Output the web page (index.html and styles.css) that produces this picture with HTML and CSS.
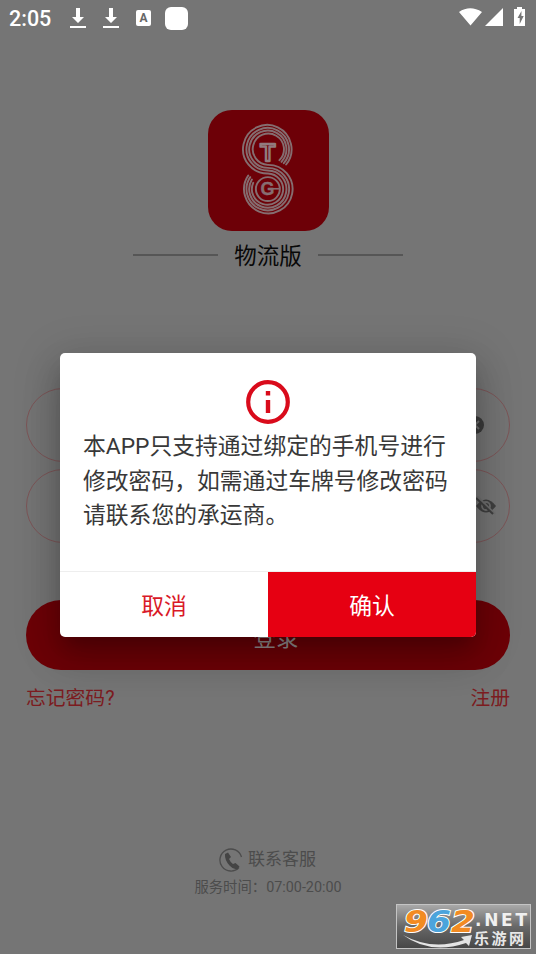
FILE: index.html
```html
<!DOCTYPE html>
<html lang="zh-CN">
<head>
<meta charset="utf-8">
<title>物流版</title>
<link rel="stylesheet" href="styles.css">
</head>
<body>
<div class="screen">
  <header class="status">
    <span class="clock">2:05</span>
    <svg class="dl" viewBox="0 0 16 22"><path d="M6 1h4v9h4l-6 6-6-6h4zM0 19h16v2H0z"/></svg>
    <svg class="dl" viewBox="0 0 16 22"><path d="M6 1h4v9h4l-6 6-6-6h4zM0 19h16v2H0z"/></svg>
    <span class="lang">A</span>
    <span class="app"></span>
    <svg class="signals" viewBox="0 0 70 22"><path d="M0 5Q11-2.500 23 5L11.500 18.500zM44 1v18H26zM55 2h3V0h5v2h3v17H55z"/><path class="bolt" d="M62.500 4l-4 7h2.200v6l4-8h-2.300z"/></svg>
  </header>
  <main class="login">
    <svg class="logo" viewBox="22 30 364 364">
      <rect class="logo-bg" x="22" y="30" width="364" height="364" rx="72"/>
      <g class="strands">
        <path d="M257 194A73 73 0 1 0 202 221A47 47 0 1 1 158 249"/>
        <path d="M250 190A64 64 0 1 0 202 212A56 56 0 1 1 154 239"/>
        <path d="M243 186A56 56 0 1 0 202 204A64 64 0 1 1 149 232"/>
        <path d="M237 181A47 47 0 1 0 202 195A73 73 0 1 1 143 227"/>
        <circle cx="202" cy="268" r="36"/>
      </g>
      <text class="letter-t" x="202" y="182" text-anchor="middle">T</text>
      <text class="letter-g" x="201" y="287" text-anchor="middle">G</text>
      <path class="g-bar" d="M208 267h30"/>
    </svg>
    <div class="edition"><i></i><span>物流版</span><i></i></div>
    <div class="field"><svg class="clear" viewBox="0 0 18 18"><circle cx="9" cy="9" r="9"/><path d="M5 5l8 8M13 5l-8 8"/></svg></div>
    <div class="field second"><svg class="eye" viewBox="0 0 22 20"><path d="M1 10Q11-3 21 10Q11 23 1 10z"/><circle cx="11" cy="10" r="4"/><path class="cut" d="M2 0l18 18"/><path class="slash" d="M1 2l17 16"/></svg></div>
    <div class="submit">登录</div>
    <div class="links"><span>忘记密码?</span><span>注册</span></div>
    <footer>
      <div class="service"><svg viewBox="0 0 24 24"><path class="ring" d="M22.500 9A11 11 0 1 0 20 19.500"/><path class="phone" d="M6 6l3-1.500 3 4.500-2 2q1.500 3.500 4 5l2.500-1 4 3.500-2 2.500q-4 1-8-3.500Q5.500 12 6 6z"/></svg><span>联系客服</span></div>
      <div class="hours">服务时间：07:00-20:00</div>
    </footer>
  </main>
  <section class="dialog">
    <svg class="info" viewBox="0 0 44 44"><circle cx="22" cy="22" r="19.800"/><path d="M19.800 11h4.400v4.400h-4.400zM19.800 20h4.400v13h-4.400z"/></svg>
    <p>本APP只支持通过绑定的手机号进行<br>修改密码，如需通过车牌号修改密码<br>请联系您的承运商。</p>
    <div class="actions"><span>取消</span><span class="confirm">确认</span></div>
  </section>
  <svg class="watermark" viewBox="0 0 135 45">
    <defs><linearGradient id="shade" x2="0" y2="1"><stop stop-color="#aaa"/><stop offset=".5" stop-color="#686868"/><stop offset="1" stop-color="#464646"/></linearGradient></defs>
    <rect x=".5" y=".5" width="134" height="44" fill="url(#shade)" stroke="#c4c4c4"/>
    <path class="swoosh" d="M7 31Q36 47 68 36L65 33L76 31L73 42L70 39Q34 51 7 31z"/>
    <g class="digits"><text class="orange" x="8" y="27.500" textLength="24" lengthAdjust="spacingAndGlyphs">9</text><text class="blue" x="31" y="27.500" textLength="24" lengthAdjust="spacingAndGlyphs">6</text><text class="orange" x="55" y="27.500" textLength="24" lengthAdjust="spacingAndGlyphs">2</text></g>
    <text class="net" x="79" y="21.500" textLength="52" lengthAdjust="spacing">.NET</text>
    <text class="site" x="78" y="39.500" textLength="50">乐游网</text>
  </svg>
</div>
</body>
</html>
```
FILE: styles.css
```css
* { box-sizing: border-box; }
body { margin: 0; font-family: Roboto, "Noto Sans CJK SC", sans-serif; }
.screen { position: relative; width: 536px; height: 954px; overflow: hidden; background: #757575; }
.status { display: flex; align-items: center; height: 36px; padding: 0 9px; color: #fff; }
.clock { width: 61px; padding-top: 2px; font-size: 21.5px; font-weight: 500; line-height: 36px; }
.dl { width: 16px; height: 22px; margin-right: 17px; fill: #fff; }
.lang { width: 15px; height: 16px; border-radius: 2px; background: #fff; color: #666; font-size: 12px; font-weight: 700; line-height: 16px; text-align: center; }
.app { width: 23px; height: 23px; margin-left: 14px; border-radius: 6px; background: #fff; }
.signals { width: 70px; height: 22px; margin-left: auto; margin-right: -2px; fill: #fff; }
.signals .bolt { fill: #757575; }
.login { display: flex; flex-direction: column; align-items: center; padding: 74px 26px 0; }
.logo { width: 121px; height: 121px; }
.logo-bg { fill: #6d0007; }
.strands { fill: none; stroke: #856d70; stroke-width: 5.8; stroke-linecap: round; }
.letter-t, .letter-g { font-family: "Liberation Sans", sans-serif; font-weight: 700; fill: #6d0007; stroke: #917b7e; stroke-width: 7; stroke-linejoin: round; }
.letter-t { font-size: 74px; }
.letter-g { font-size: 54px; fill: #856d70; stroke-width: 1; }
.g-bar { stroke: #856d70; stroke-width: 5; }
.edition { display: flex; align-items: center; gap: 16px; height: 36px; margin-top: 7px; color: #080808; font-size: 22.5px; line-height: 37px; }
.edition i { width: 85px; height: 2px; margin-bottom: 3px; background: #565656; }
.field { display: flex; align-items: center; justify-content: flex-end; width: 484px; height: 74px; margin-top: 114px; padding-right: 25px; border: 1.500px solid #7d5658; border-radius: 37px; }
.field.second { margin-top: 7px; padding-right: 12px; }
.clear { width: 18px; height: 18px; fill: #3b3b3b; }
.clear path { stroke: #707070; stroke-width: 2; }
.eye { width: 22px; height: 20px; fill: #3f3f3f; }
.eye circle { fill: none; stroke: #6e6e6e; stroke-width: 1.800; }
.eye .cut { stroke: #6e6e6e; stroke-width: 2; }
.eye .slash { stroke: #3f3f3f; stroke-width: 2; }
.submit { width: 484px; height: 70px; margin-top: 57px; padding-left: 16px; border-radius: 35px; background: #6d0007; color: #969090; font-size: 22.500px; line-height: 77px; text-align: center; }
.links { display: flex; justify-content: space-between; width: 484px; height: 30px; margin-top: 13px; color: #7c1b20; font-size: 19.800px; line-height: 32px; }
footer { display: flex; flex-direction: column; align-items: center; margin-top: 132px; color: #4c4c4c; }
.service { display: flex; align-items: center; gap: 5px; height: 28px; margin-right: 1px; font-size: 17px; line-height: 28px; }
.service svg { width: 24px; height: 24px; margin-top: 2px; }
.ring { fill: none; stroke: #4c4c4c; stroke-width: 1.300; }
.phone { fill: #444; }
.hours { height: 24px; margin-top: 3px; font-size: 14.350px; line-height: 24px; }
.dialog { position: absolute; left: 60px; top: 353px; display: flex; flex-direction: column; align-items: center; width: 416px; height: 284px; overflow: hidden; border-radius: 5px; background: #fff; box-shadow: 0 12px 18px -6px rgba(0,0,0,.2), 0 22px 38px 3px rgba(0,0,0,.14), 0 8px 44px 8px rgba(0,0,0,.12); }
.info { width: 44px; height: 44px; margin-top: 27px; fill: #d90b1b; }
.info circle { fill: none; stroke: #d90b1b; stroke-width: 4.200; }
.dialog p { width: 370px; margin: 6px 0 0; color: #383838; font-size: 22.800px; line-height: 34.500px; white-space: nowrap; }
.actions { display: grid; grid-template-columns: 1fr 1fr; width: 100%; height: 66px; margin-top: auto; border-top: 1px solid #eee; color: #d91928; font-size: 22.800px; line-height: 69px; text-align: center; }
.actions span { height: 65px; }
.confirm { background: #e60012; color: #fff; }
.watermark { position: absolute; left: 396px; top: 904px; width: 135px; height: 45px; overflow: visible; }
.digits { font: italic 700 31px "DejaVu Sans", sans-serif; stroke: #fff; stroke-width: 2; paint-order: stroke; }
.orange { fill: #f28b22; }
.blue { fill: #4ba4dc; }
.swoosh { fill: #e4e4e4; }
.net { fill: #f0f0f0; font: 700 17px "DejaVu Sans", sans-serif; }
.site { fill: #e8e8e8; font: 700 15px "Noto Sans CJK SC", sans-serif; }
```
